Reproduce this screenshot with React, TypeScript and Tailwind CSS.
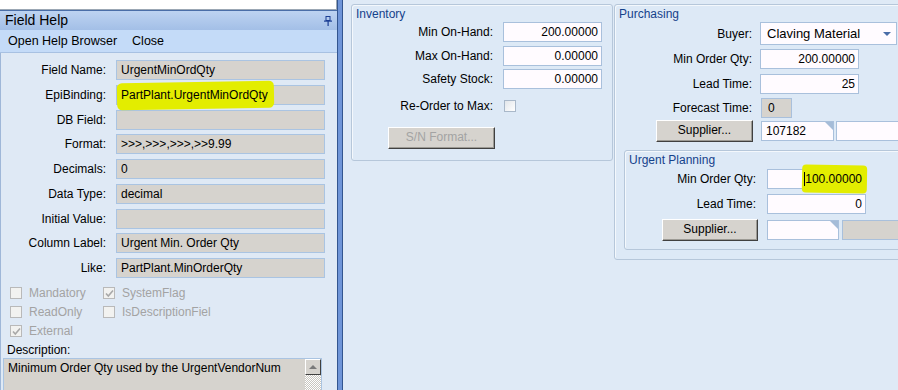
import type { ReactNode } from 'react';

const FONT = "font-['Liberation_Sans',Arial,sans-serif]";

// Grey read-only box used in the Field Help panel
function ReadBox({ children }: { children?: ReactNode }) {
  return (
    <div className="h-[20px] w-[209px] border border-[#aac4e2] bg-[#d6d3ce] pl-[4px] leading-[18px] text-black">
      {children}
    </div>
  );
}

function HelpRow({ label, children }: { label: string; children?: ReactNode }) {
  return (
    <div className="flex items-center">
      <div className="w-[106px] pr-[1px] text-right">{label}</div>
      <div className="ml-[9px]">
        <ReadBox>{children}</ReadBox>
      </div>
    </div>
  );
}

function Check({ label, checked }: { label: string; checked?: boolean }) {
  return (
    <div className="flex items-center gap-[7px] text-[#a3a3a3]">
      <div className="relative h-[12px] w-[12px] border border-[#b9b9b9] bg-[#f2f2f0]">
        {checked && (
          <svg className="absolute left-[1px] top-[1px]" width="9" height="9" viewBox="0 0 9 9">
            <path d="M1 4.5 L3.3 7 L8 1.5" fill="none" stroke="#a8a8a8" strokeWidth="1.6" />
          </svg>
        )}
      </div>
      <span>{label}</span>
    </div>
  );
}

function NumBox({ value, w = 'w-[99px]' }: { value?: ReactNode; w?: string }) {
  return (
    <div className={`h-[20px] ${w} border border-[#a9c0dc] bg-[#fffbff] pr-[3px] text-right leading-[18px] text-black`}>
      {value}
    </div>
  );
}

function Btn({ label, w, disabled }: { label: string; w: string; disabled?: boolean }) {
  return (
    <div
      className={`h-[22px] ${w} border border-t-white border-l-white border-r-[#404040] border-b-[#404040] bg-[#d6d3ce] text-center leading-[19px] shadow-[inset_-1px_-1px_0_#9c9a94] ${
        disabled ? 'text-[#a3a3a3]' : 'text-black'
      }`}
    >
      {label}
    </div>
  );
}

// Lookup input with the small corner flag
function LookupBox({ value, w }: { value?: string; w: string }) {
  return (
    <div className={`relative h-[20px] ${w} border border-[#a9c0dc] bg-[#fffbff] pl-[4px] leading-[18px] text-black`}>
      {value}
      <div className="absolute right-0 top-0 h-0 w-0 border-l-[8px] border-t-[8px] border-l-transparent border-t-[#a5bcd8]" />
    </div>
  );
}

function Group({ title, className, children }: { title: string; className: string; children: ReactNode }) {
  return (
    <div
      className={`rounded-[3px] border border-[#b6c7da] bg-[#dde9f6] shadow-[inset_1px_1px_0_#f4f8fc] ${className}`}
    >
      <div className="pl-[4px] pt-[1px] leading-[16px] text-[#15428b]">{title}</div>
      {children}
    </div>
  );
}

export default function App() {
  return (
    <div className={`flex h-[390px] w-[898px] overflow-hidden bg-[#dfeaf6] text-[12px] ${FONT}`}>
      {/* Field Help panel */}
      <div className="flex w-[338px] shrink-0 flex-col border-r border-[#33558f]">
        <div className="h-[10px] shrink-0 border-b border-r border-[#9ba7b4] bg-white" />
        <div className="h-[1px] shrink-0 bg-[#4a6ea8]" />
        <div className="flex h-[19px] shrink-0 items-center justify-between bg-gradient-to-b from-[#bdd3f1] to-[#a3bfe7] pl-[5px] pr-[5px] text-[14px] text-black">
          <span>Field Help</span>
          <svg width="8" height="10" viewBox="0 0 8 10">
            <rect x="2" y="0.5" width="4" height="4" fill="none" stroke="#1c3f94" />
            <rect x="0" y="4.5" width="8" height="1.2" fill="#1c3f94" />
            <rect x="3.5" y="5" width="1.2" height="5" fill="#1c3f94" />
          </svg>
        </div>
        <div className="flex h-[23px] shrink-0 items-center gap-[15px] border-b border-[#a8c1e2] bg-[#c4dbf8] pl-[8px] text-[12.5px] text-black">
          <span>Open Help Browser</span>
          <span>Close</span>
        </div>
        <div className="flex min-h-0 flex-1 flex-col overflow-hidden border-l border-[#9fb7d8] bg-[#dfe9f5] pt-[7px]">
          <div className="flex flex-col gap-[4.75px]">
            <HelpRow label="Field Name:">UrgentMinOrdQty</HelpRow>
            <HelpRow label="EpiBinding:">
              <span className="relative">
                <span className="absolute -left-[4px] -right-[6px] -top-[6px] -bottom-[7px] -rotate-1 rounded-[5px] bg-[#e3ed00]" />
                <span className="relative">PartPlant.UrgentMinOrdQty</span>
              </span>
            </HelpRow>
            <HelpRow label="DB Field:" />
            <HelpRow label="Format:">&gt;&gt;&gt;,&gt;&gt;&gt;,&gt;&gt;&gt;,&gt;&gt;9.99</HelpRow>
            <HelpRow label="Decimals:">0</HelpRow>
            <HelpRow label="Data Type:">decimal</HelpRow>
            <HelpRow label="Initial Value:" />
            <HelpRow label="Column Label:">Urgent Min. Order Qty</HelpRow>
            <HelpRow label="Like:">PartPlant.MinOrderQty</HelpRow>
          </div>

          <div className="mt-[9px] grid w-[240px] grid-cols-[93px_1fr] gap-y-[7px] pl-[9px] leading-[12px]">
            <Check label="Mandatory" />
            <Check label="SystemFlag" checked />
            <Check label="ReadOnly" />
            <Check label="IsDescriptionFiel" />
            <Check label="External" checked />
          </div>

          <div className="mt-[6px] shrink-0 pl-[6px] leading-[14px] text-black">Description:</div>
          <div className="ml-[2px] mt-[1px] flex h-[40px] w-[319px] shrink-0 border border-[#aac4e2] bg-[#d6d3ce]">
            <div className="flex-1 pl-[4px] pt-[1px] leading-[16px] text-black">Minimum Order Qty used by the UrgentVendorNum</div>
            <div className="flex w-[16px] flex-col">
              <div className="flex h-[16px] items-center justify-center border border-t-white border-l-white border-r-[#404040] border-b-[#404040] bg-[#d6d3ce]">
                <div className="h-0 w-0 border-x-[4px] border-b-[4px] border-x-transparent border-b-[#7a7a7a]" />
              </div>
              <div className="flex-1 bg-[repeating-conic-gradient(#c9c6c0_0%_25%,#ffffff_0%_50%)] bg-size-[2px_2px]" />
            </div>
          </div>
        </div>
      </div>

      {/* splitter */}
      <div className="w-[5px] shrink-0 border-r border-[#33558f] bg-[#6f95d8]" />

      {/* Part plant detail */}
      <div className="flex flex-1 items-start pl-[8px] pt-[4px] text-black">
        <Group title="Inventory" className="h-[157px] w-[262px] shrink-0">
          <div className="flex flex-col gap-[3.5px]">
            {[
              ['Min On-Hand:', '200.00000'],
              ['Max On-Hand:', '0.00000'],
              ['Safety Stock:', '0.00000'],
            ].map(([l, v]) => (
              <div key={l} className="flex items-center">
                <div className="w-[141px] text-right">{l}</div>
                <div className="ml-[10px]">
                  <NumBox value={v} />
                </div>
              </div>
            ))}
            <div className="mt-[4px] flex items-center">
              <div className="w-[141px] text-right">Re-Order to Max:</div>
              <div className="ml-[11px] h-[12px] w-[12px] border border-[#a9b8c9] bg-gradient-to-br from-[#e2e6ea] to-white" />
            </div>
          </div>
          <div className="ml-[36px] mt-[12px]">
            <Btn label="S/N Format..." w="w-[107px]" disabled />
          </div>
        </Group>

        <Group title="Purchasing" className="ml-[1px] -mr-[6px] h-[256px] flex-1">
          <div className="flex flex-col">
            <div className="flex items-center">
              <div className="w-[137px] text-right">Buyer:</div>
              <div className="ml-[8px] flex h-[23px] w-[137px] items-center justify-between border border-[#a9c0dc] bg-[#fffbff] pl-[6px] pr-[5px] text-[13px]">
                <span>Claving Material</span>
                <div className="h-0 w-0 border-x-[4px] border-t-[4px] border-x-transparent border-t-[#4a6ea8]" />
              </div>
            </div>
            <div className="mt-[4px] flex items-center">
              <div className="w-[137px] text-right">Min Order Qty:</div>
              <div className="ml-[8px]">
                <NumBox value="200.00000" />
              </div>
            </div>
            <div className="mt-[5px] flex items-center">
              <div className="w-[137px] text-right">Lead Time:</div>
              <div className="ml-[8px]">
                <NumBox value="25" />
              </div>
            </div>
            <div className="mt-[4px] flex items-center">
              <div className="w-[137px] text-right">Forecast Time:</div>
              <div className="ml-[9px] h-[20px] w-[31px] border border-[#a9c0dc] bg-[#d6d3ce] pl-[6px] leading-[18px]">0</div>
            </div>
            <div className="mt-[2px] flex items-center">
              <div className="ml-[41px]">
                <Btn label="Supplier..." w="w-[97px]" />
              </div>
              <div className="ml-[8px]">
                <LookupBox value="107182" w="w-[73px]" />
              </div>
              <div className="ml-[2px] h-[20px] flex-1 border border-[#a9c0dc] bg-[#fffbff]" />
            </div>
          </div>

          <Group title="Urgent Planning" className="-mr-[2px] ml-[9px] mt-[8px] h-[100px]">
            <div className="mt-[1px] flex items-center">
              <div className="w-[131px] text-right">Min Order Qty:</div>
              <div className="ml-[11px] flex h-[20px] w-[99px] items-center justify-end border border-[#a9c0dc] bg-[#fffbff] pr-[3px]">
                <span className="relative">
                  <span className="absolute -left-[2px] -right-[5px] -top-[5px] -bottom-[5px] rotate-1 rounded-[4px] bg-[#e3ed00]" />
                  <span className="relative border-l border-black">100.00000</span>
                </span>
              </div>
            </div>
            <div className="mt-[5px] flex items-center">
              <div className="w-[131px] text-right">Lead Time:</div>
              <div className="ml-[11px]">
                <NumBox value="0" />
              </div>
            </div>
            <div className="mt-[5px] flex items-center">
              <div className="ml-[37px]">
                <Btn label="Supplier..." w="w-[96px]" />
              </div>
              <div className="ml-[9px]">
                <LookupBox w="w-[72px]" />
              </div>
              <div className="ml-[3px] h-[20px] flex-1 border border-[#a9c0dc] bg-[#d6d3ce]" />
            </div>
          </Group>
        </Group>
      </div>
    </div>
  );
}
